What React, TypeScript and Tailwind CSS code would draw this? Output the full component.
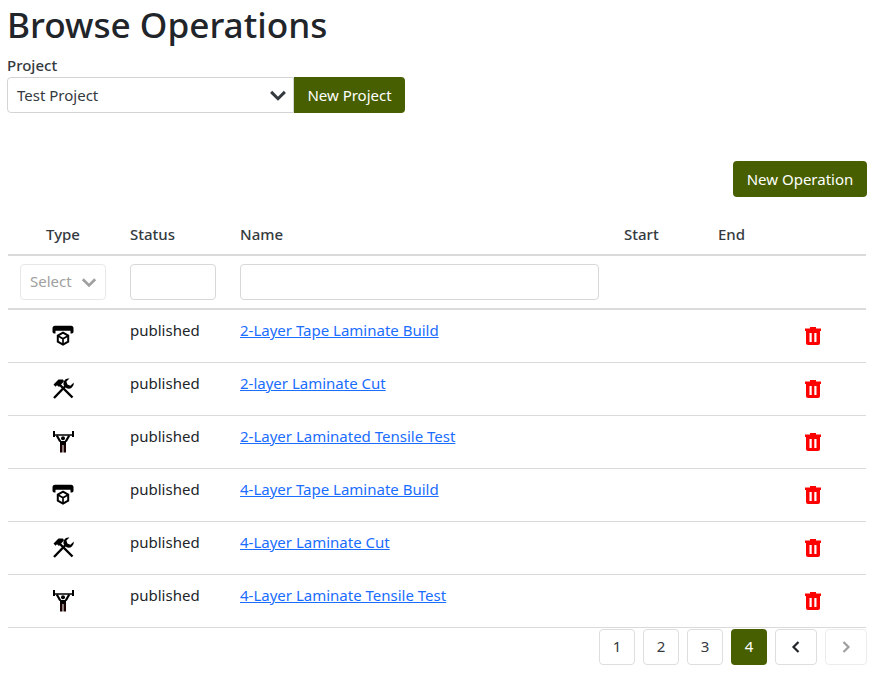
function BuildIcon() {
  return (
    <svg width="24" height="24" viewBox="0 0 24 24" className="block">
      <path d="M4 1.800h16a2.500 2.500 0 0 1 2.500 2.500v3.500a1.700 1.700 0 0 1-1.700 1.700h-1.300V6.800h-15v2.700H3.200a1.700 1.700 0 0 1-1.700-1.700V4.300A2.500 2.500 0 0 1 4 1.800z" fill="#000" />
      <path d="M12 8.700l5.200 3v6l-5.200 3-5.200-3v-6z" fill="none" stroke="#000" strokeWidth="2" />
      <path d="M7.200 12L12 14.800l4.800-2.800M12 14.800V20" fill="none" stroke="#000" strokeWidth="1.700" />
    </svg>
  )
}

function ToolsIcon() {
  return (
    <svg width="24" height="24" viewBox="0 0 24 24" className="block">
      <path d="M9 8l12.500 12.500" fill="none" stroke="#000" strokeWidth="2.400" />
      <path d="M2.500 7.500L7.500 2.500h4.500l1 1.800-5 5.700-2-1.800-1.500 1.500z" fill="#000" />
      <path d="M3 21L15 8.500" fill="none" stroke="#000" strokeWidth="2.400" />
      <path d="M18.500 1.500a5.200 5.200 0 0 0-5.800 6.800l2.900 3a5.200 5.200 0 0 0 7.100-5.800L19.400 8.800l-3-1.200-1-3z" fill="#000" />
    </svg>
  )
}

function LiftIcon() {
  return (
    <svg width="24" height="24" viewBox="0 0 24 24" className="block">
      <path d="M2 1h2v3.200h17V1h2v6h-2V5.800H4V7H2z" fill="#000" />
      <path d="M5.800 5.500L9.200 11.500M18.200 5.500L14.800 11.500" fill="none" stroke="#000" strokeWidth="2.200" />
      <circle cx="12" cy="8.200" r="2" fill="#000" />
      <path d="M9 11h6v4H9z" fill="#000" />
      <path d="M9 14.500h2.500v8H9zM12.500 14.500H15v8h-2.500z" fill="#1a0000" />
    </svg>
  )
}

function TrashIcon() {
  return (
    <svg width="16" height="18" viewBox="0 0 16 18" className="block">
      <path d="M5 0h6v1.500h5V4H0V1.500h5z" fill="#ff0000" />
      <path d="M1 4h14v12a2 2 0 0 1-2 2H3a2 2 0 0 1-2-2z" fill="#ff0000" />
      <rect x="4.500" y="6" width="2.200" height="9" fill="#fff" />
      <rect x="9.300" y="6" width="2.200" height="9" fill="#fff" />
    </svg>
  )
}

function Chevron({ color, size = 18 }: { color: string; size?: number }) {
  return (
    <svg width={size} height={size} viewBox="0 0 16 16" className="block">
      <path d="M2.500 5.500L8 11l5.500-5.500" fill="none" stroke={color} strokeWidth="2.400" />
    </svg>
  )
}

const rows = [
  { type: 'build', name: '2-Layer Tape Laminate Build' },
  { type: 'cut', name: '2-layer Laminate Cut' },
  { type: 'test', name: '2-Layer Laminated Tensile Test' },
  { type: 'build', name: '4-Layer Tape Laminate Build' },
  { type: 'cut', name: '4-Layer Laminate Cut' },
  { type: 'test', name: '4-Layer Laminate Tensile Test' },
]

function PageButton({ label, active }: { label: string; active?: boolean }) {
  return (
    <button
      className={
        active
          ? 'flex h-9 w-9 items-center justify-center rounded bg-[#475f00] text-white'
          : 'flex h-9 w-9 items-center justify-center rounded border border-[#dedede] text-[#343a40]'
      }
    >
      {label}
    </button>
  )
}

export default function App() {
  return (
    <div className="w-[882px] h-[682px] overflow-hidden bg-white px-2 pt-0 text-[15px] text-[#212529] font-['Noto_Sans','Open_Sans',sans-serif]">
      <div className="-ml-px">
        <h1 className="h-[49px] text-[35.200px] leading-[48px] font-medium">Browse Operations</h1>
        <label className="mt-1 block h-6 text-[15px] leading-6 font-medium text-[#343a40]">Project</label>
        <div className="flex w-[398px]">
          <div className="flex h-9 w-[287px] items-center justify-between rounded-l border border-[#d4d4d4] pl-[9px] pr-[5px] text-[#343a40]">
            <span>Test Project</span>
            <Chevron color="#343a40" size={20} />
          </div>
          <button className="h-9 w-[111px] rounded-r bg-[#475f00] text-white">New Project</button>
        </div>
      </div>

      <div className="mt-12 flex justify-end pr-[7px]">
        <button className="h-9 w-[134px] rounded bg-[#475f00] text-white">New Operation</button>
      </div>

      <table className="mt-[19px] w-[858px] table-fixed border-collapse">
        <thead>
          <tr className="h-[39px] border-b-2 border-[#dadada] text-[#343a40]">
            <th className="w-[110px] pb-[2px] text-center font-medium">Type</th>
            <th className="w-[110px] pb-[2px] pl-[12px] text-left font-medium">Status</th>
            <th className="w-[384px] pb-[2px] pl-[12px] text-left font-medium">Name</th>
            <th className="w-[94px] pb-[2px] pl-[12px] text-left font-medium">Start</th>
            <th className="w-[80px] pb-[2px] pl-[12px] text-left font-medium">End</th>
            <th />
          </tr>
          <tr className="h-[54px] border-b-2 border-[#dadada]">
            <th className="pl-[12px] text-left font-normal">
              <div className="flex h-9 w-[86px] items-center justify-between rounded border border-[#e8e8e8] pb-[1px] pl-[9px] pr-[7px] text-[#a0a0a0]">
                <span>Select</span>
                <Chevron color="#a0a0a0" />
              </div>
            </th>
            <th className="pl-[12px] text-left font-normal">
              <input className="block h-9 w-[86px] rounded border border-[#d8d8d8]" />
            </th>
            <th className="pl-[12px] text-left font-normal">
              <input className="block h-9 w-[359px] rounded border border-[#d8d8d8]" />
            </th>
            <th />
            <th />
            <th />
          </tr>
        </thead>
        <tbody>
          {rows.map((row) => (
            <tr key={row.name} className="h-[53px] border-b border-[#dadada]">
              <td className="align-middle">
                <div className="flex justify-center">
                  {row.type === 'build' && <BuildIcon />}
                  {row.type === 'cut' && <ToolsIcon />}
                  {row.type === 'test' && <LiftIcon />}
                </div>
              </td>
              <td className="pl-[12px] pt-[10px] align-top leading-5">published</td>
              <td className="pl-[12px] pt-[10px] align-top leading-5">
                <a href="#" className="text-[#1a6dff] underline">
                  {row.name}
                </a>
              </td>
              <td />
              <td />
              <td className="align-middle">
                <div className="flex justify-start pl-[19px] pt-[1px]">
                  <TrashIcon />
                </div>
              </td>
            </tr>
          ))}
        </tbody>
      </table>

      <div className="mt-[1px] flex justify-end gap-2 pr-[7px]">
        <PageButton label="1" />
        <PageButton label="2" />
        <PageButton label="3" />
        <PageButton label="4" active />
        <button className="flex h-9 w-[42px] items-center justify-center rounded border border-[#dedede]">
          <svg width="12" height="14" viewBox="0 0 12 14" className="block">
            <path d="M8.500 2L3.500 7l5 5" fill="none" stroke="#212529" strokeWidth="2.200" />
          </svg>
        </button>
        <button className="flex h-9 w-[42px] items-center justify-center rounded border border-[#ececec]">
          <svg width="12" height="14" viewBox="0 0 12 14" className="block">
            <path d="M3.500 2l5 5-5 5" fill="none" stroke="#a0a0a0" strokeWidth="2.200" />
          </svg>
        </button>
      </div>
    </div>
  )
}
